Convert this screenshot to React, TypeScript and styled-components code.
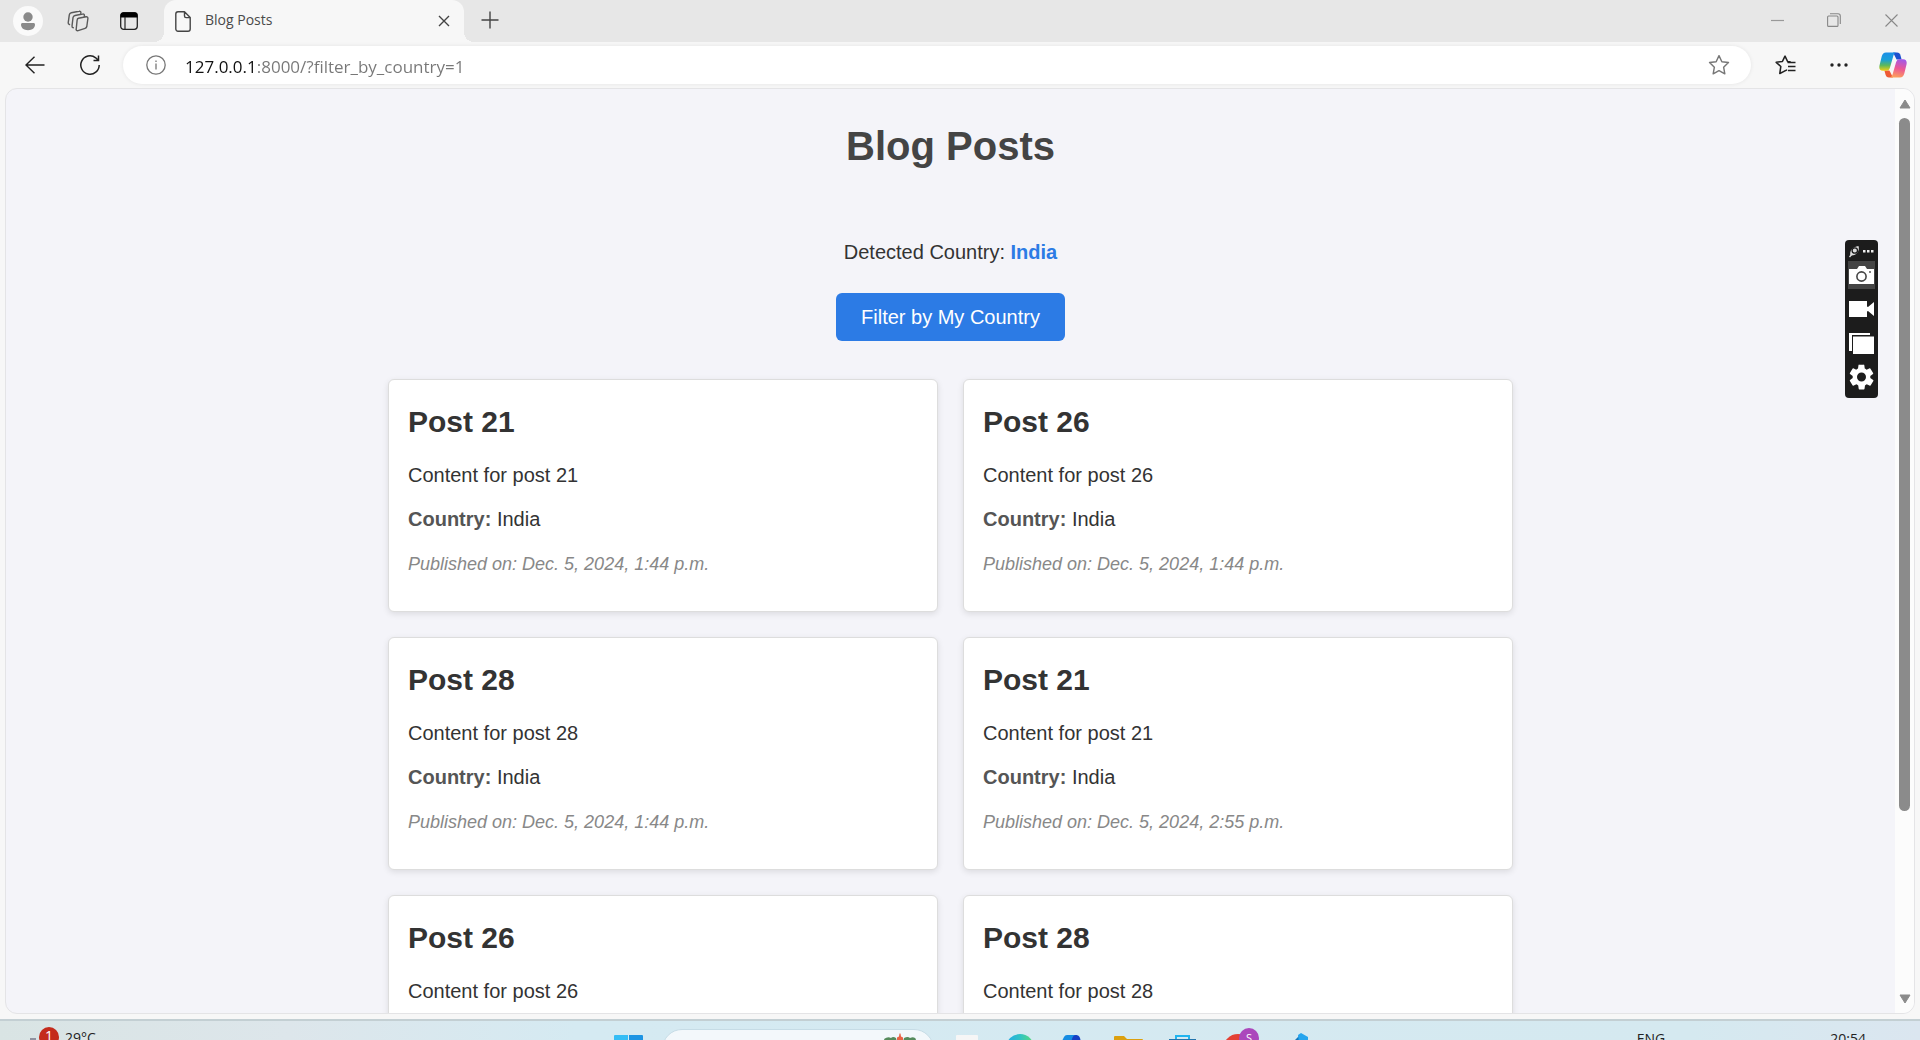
import React from "react";
import styled, { createGlobalStyle } from "styled-components";

const GlobalStyle = createGlobalStyle`
  *, *::before, *::after { box-sizing: border-box; }
  body { margin: 0; overflow: hidden; background: #f7f7f7; }
  button, input { font: inherit; margin: 0; }
`;

const uiFont = `"Open Sans", "Noto Sans", sans-serif`;

const Desktop = styled.div`
  display: flex;
  flex-direction: column;
  height: 100vh;
  overflow: hidden;
  font-family: ${uiFont};
`;

const BrowserWindow = styled.div`
  flex: 1;
  min-height: 0;
  display: flex;
  flex-direction: column;
  background: #f7f7f7;
`;

const TabStrip = styled.header`
  display: flex;
  height: 42px;
  padding-left: 3px;
  background: #e7e7e7;
`;

const IconButton = styled.button<{ $width?: number }>`
  display: flex;
  align-items: center;
  justify-content: center;
  flex: none;
  width: ${(p) => p.$width ?? 50}px;
  padding: 0;
  border: 0;
  background: none;
  color: #3c3c3c;
`;

const Avatar = styled.span`
  display: block;
  width: 30px;
  height: 30px;
  border-radius: 50%;
  background: #fafafa;
`;

const Tab = styled.div`
  position: relative;
  display: flex;
  align-items: center;
  width: 300px;
  margin-left: 9px;
  padding: 0 4px 0 11px;
  border-radius: 12px 12px 0 0;
  background: #f7f7f7;
  &::before, &::after {
    content: "";
    position: absolute;
    bottom: 0;
    width: 10px;
    height: 10px;
  }
  &::before {
    right: 100%;
    background: radial-gradient(circle at 0 0, transparent 10px, #f7f7f7 10px);
  }
  &::after {
    left: 100%;
    background: radial-gradient(circle at 100% 0, transparent 10px, #f7f7f7 10px);
  }
`;

const TabTitle = styled.span`
  flex: 1;
  padding: 0 0 2px 14px;
  font-size: 14px;
  line-height: 20px;
  color: #4a4a4a;
`;

const WindowControls = styled.div`
  display: flex;
  margin-left: auto;
`;

const Toolbar = styled.nav`
  display: flex;
  align-items: center;
  height: 46px;
  padding: 0 4px 0 7px;
`;

const AddressBar = styled.form`
  flex: 1;
  display: flex;
  align-items: center;
  height: 38px;
  margin-left: 6px;
  margin-right: 11px;
  padding: 0 7px 0 8px;
  border-radius: 19px;
  background: #fff;
  box-shadow: 0 0 4px rgba(0, 0, 0, 0.08);
`;

/* The host part is black, the rest of the address is grey. */
const AddressInput = styled.input`
  flex: 1;
  min-width: 0;
  height: 30px;
  padding: 2px 0 0 4px;
  border: 0;
  outline: 0;
  font-size: 17px;
  line-height: 28px;
  color: transparent;
  background: linear-gradient(90deg, #111 76px, #777 76px);
  background-clip: text;
  -webkit-background-clip: text;
`;

const Viewport = styled.div`
  flex: 1;
  min-height: 0;
  display: flex;
  margin: 0 5px 5px;
  border: 1px solid #e4e4e6;
  border-radius: 12px;
  overflow: hidden;
  background: #f4f4f9;
`;

const Page = styled.main`
  flex: 1;
  overflow: hidden;
  padding-top: 34px;
  font-family: "Liberation Sans", Arial, sans-serif;
  color: #333;
`;

const PageTitle = styled.h1`
  margin: 0;
  font-size: 40px;
  line-height: 46px;
  text-align: center;
  color: #444;
`;

const FilterSection = styled.section`
  display: flex;
  flex-direction: column;
  align-items: center;
  gap: 26px;
  margin: 68px 0 38px;
`;

const Detected = styled.p`
  margin: 0;
  font-size: 20px;
  line-height: 30px;
  strong { color: #2c7be5; }
`;

const FilterButton = styled.button`
  height: 48px;
  padding: 0 25px;
  border: 0;
  border-radius: 6px;
  background: #2c7be5;
  color: #fff;
  font-size: 20px;
  line-height: 24px;
`;

const PostGrid = styled.section`
  display: grid;
  grid-template-columns: 1fr 1fr;
  gap: 25px;
  max-width: 1125px;
  margin: 0 auto;
`;

const Card = styled.article`
  padding: 21px 19px 33px;
  border: 1px solid #ddd;
  border-radius: 6px;
  background: #fff;
  box-shadow: 0 2px 6px rgba(0, 0, 0, 0.1);
`;

const PostTitle = styled.h2`
  margin: 0 0 17px;
  font-size: 30px;
  line-height: 42px;
`;

const PostText = styled.p`
  margin: 0 0 14px;
  font-size: 20px;
  line-height: 30px;
  strong { color: #555; }
`;

const Published = styled.p`
  margin: 17px 0 0;
  font-size: 18px;
  line-height: 27px;
  font-style: italic;
  color: #888;
`;

const Scrollbar = styled.div`
  display: flex;
  flex-direction: column;
  align-items: center;
  flex: none;
  width: 19px;
  background: #fcfcfc;
`;

const ArrowBox = styled.span`
  display: flex;
  align-items: center;
  justify-content: center;
  height: 29px;
`;

const Track = styled.div`
  flex: 1;
  display: flex;
  flex-direction: column;
  width: 11px;
  &::before {
    content: "";
    flex: 4;
    border-radius: 6px;
    background: #8b8b8b;
  }
  &::after { content: ""; flex: 1; }
`;

const CaptureBar = styled.aside`
  position: fixed;
  top: 240px;
  right: 42px;
  display: flex;
  flex-direction: column;
  width: 33px;
  height: 158px;
  padding: 1px 3px 4px;
  border-radius: 4px;
  background: #1c1c1c;
`;

const CaptureButton = styled.button<{ $active?: boolean; $small?: boolean }>`
  display: flex;
  align-items: center;
  justify-content: center;
  flex: none;
  height: ${(p) => (p.$small ? 20 : 28)}px;
  margin-bottom: ${(p) => (p.$small ? 0 : 6)}px;
  padding: 0;
  border: 0;
  background: ${(p) => (p.$active ? "#444" : "none")};
`;

const Taskbar = styled.footer`
  display: grid;
  grid-template-columns: 1fr auto 1fr;
  height: 21px;
  overflow: hidden;
  border-top: 2px solid #c3cfd3;
  background: linear-gradient(90deg, #d9e4e4 0, #dde6eb 15%, #d5eaf2 30%, #d5e9f0 88%, #dbe6f0 100%);
`;

const Weather = styled.div`
  display: flex;
  padding-left: 30px;
  font-size: 14px;
  line-height: 20px;
  color: #222;
`;

const WeatherText = styled.span`
  padding: 7px 0 0 6px;
`;

const Apps = styled.div`
  display: flex;
  gap: 6px;
`;

const AppList = styled.div`
  display: flex;
`;

const TaskButton = styled.button`
  display: block;
  width: 54px;
  height: 40px;
  padding: 0;
  border: 0;
  background: none;
`;

const SearchBox = styled.div`
  display: flex;
  justify-content: flex-end;
  width: 272px;
  height: 40px;
  margin-top: 8px;
  padding-right: 16px;
  border: 1px solid #c6dce6;
  border-radius: 20px;
  background: #f3f8fb;
`;

const Tray = styled.div`
  display: flex;
  justify-content: flex-end;
  padding: 8px 54px 0 0;
  font-size: 14px;
  line-height: 20px;
  color: #222;
`;

const TrayItem = styled.span<{ $gap: number }>`
  margin-right: ${(p) => p.$gap}px;
`;

const Svg = ({ w, h, children, vb }: { w: number; h: number; vb?: string; children: React.ReactNode }) => (
  <svg width={w} height={h} viewBox={vb ?? `0 0 ${w} ${h}`} fill="none" aria-hidden="true">
    {children}
  </svg>
);

const CopilotIcon = () => (
  <Svg w={28} h={26}>
    <defs>
      <linearGradient id="cpBlue" x1="0" y1="0" x2="0" y2="1">
        <stop offset="0" stopColor="#1b8fe8" />
        <stop offset="0.4" stopColor="#1aa0d8" />
        <stop offset="0.7" stopColor="#5cb85c" />
        <stop offset="1" stopColor="#f2cf14" />
      </linearGradient>
      <linearGradient id="cpPink" x1="0.6" y1="0" x2="0.4" y2="1">
        <stop offset="0" stopColor="#a259e8" />
        <stop offset="0.5" stopColor="#ec5795" />
        <stop offset="1" stopColor="#fda05a" />
      </linearGradient>
    </defs>
    <path d="M14 0.500h4c2 0 3 1.200 3.500 3l1.100 4h-5z" fill="#1c50cf" />
    <path d="M14 25.500h-4c-2 0-3-1.200-3.500-3l-1.100-4h5z" fill="#ee5a35" />
    <path d="M7 0.500h10c-1.500.5-2.200 1.800-2.700 3.500L11 15.500c-.6 2.100-1.600 3.300-4 3.300H4C.5 18.800-.1 16.300.5 13.500L2.700 4.500C3.500 1.800 4.700.5 7 .5z" fill="url(#cpBlue)" />
    <path d="M21 25.500H11c1.500-.5 2.200-1.800 2.700-3.500L17 10.500c.6-2.100 1.600-3.300 4-3.300h3c3.500 0 4.100 2.500 3.500 5.300l-2.200 9c-.8 2.700-2 4-4.300 4z" fill="url(#cpPink)" />
  </Svg>
);

const starPath = "M10 1.500l2.600 5.500 6 .8-4.400 4.200 1.100 6L10 15.100 4.700 18l1.100-6L1.400 7.800l6-.8z";

const posts = [
  { title: "21", time: "1:44" },
  { title: "26", time: "1:44" },
  { title: "28", time: "1:44" },
  { title: "21", time: "2:55" },
  { title: "26", time: "2:55" },
  { title: "28", time: "2:55" },
];

const PostCard = ({ title, time }: { title: string; time: string }) => (
  <Card>
    <PostTitle>Post {title}</PostTitle>
    <PostText>Content for post {title}</PostText>
    <PostText><strong>Country:</strong> India</PostText>
    <Published>Published on: Dec. 5, 2024, {time} p.m.</Published>
  </Card>
);

const BrowserTabs = () => (
  <TabStrip>
    <IconButton aria-label="Profile">
      <Avatar>
        <Svg w={30} h={30}>
          <circle cx="15" cy="11" r="4.700" fill="#8a8a8a" />
          <path d="M8 18.500c0-.8.600-1.500 1.500-1.500h11c.9 0 1.500.7 1.500 1.500 0 3.500-2.700 5.700-7 5.700s-7-2.200-7-5.700z" fill="#8a8a8a" />
        </Svg>
      </Avatar>
    </IconButton>
    <IconButton aria-label="Workspaces">
      <Svg w={22} h={22}>
        <g stroke="#5a5a5a" strokeWidth="1.400" strokeLinejoin="round" strokeLinecap="round">
          <path d="M11.500 8.300l7.600-1.500c1.200-.2 2 .6 1.800 1.700l-1.100 8c-.2 1-.8 1.600-1.700 1.900l-7 2.300c-1.200.4-2.100-.3-1.900-1.500l.9-8.800c.1-1.200.5-1.900 1.400-2.100z" />
          <path d="M17.300 6.500l.1-1c.1-1.100-.7-1.800-1.800-1.500L8 5.500C6.900 5.800 6.200 6.500 6 7.600l-1 8.500c-.1.900.4 1.500 1.300 1.600" />
          <path d="M13.800 3.800l.1-1c.1-1.100-.7-1.800-1.800-1.500L4.300 2.800C3.200 3.100 2.500 3.800 2.300 4.900L1.200 12.800c-.1.900.4 1.500 1.300 1.700" />
        </g>
      </Svg>
    </IconButton>
    <IconButton $width={52} aria-label="Tab actions">
      <Svg w={18} h={18}>
        <rect x="0.700" y="0.700" width="16.600" height="16.600" rx="3" stroke="#222" strokeWidth="1.300" />
        <path d="M0.500 5.500V3.500a3 3 0 0 1 3-3h11a3 3 0 0 1 3 3v2z" fill="#000" />
        <path d="M5 5v12.500" stroke="#222" strokeWidth="1.200" />
      </Svg>
    </IconButton>
    <Tab>
      <Svg w={16} h={21}>
        <path d="M3 .8h6.500L15.200 6.500V18a2.200 2.200 0 0 1-2.200 2.200H3A2.200 2.200 0 0 1 .8 18V3A2.200 2.200 0 0 1 3 .8zM9.500 1v4a1.600 1.600 0 0 0 1.600 1.600H15" stroke="#444" strokeWidth="1.400" strokeLinejoin="round" />
      </Svg>
      <TabTitle>Blog Posts</TabTitle>
      <IconButton $width={32} aria-label="Close tab">
        <Svg w={12} h={12}><path d="M1 1l10 10M11 1L1 11" stroke="#444" strokeWidth="1.400" /></Svg>
      </IconButton>
    </Tab>
    <IconButton $width={52} aria-label="New tab">
      <Svg w={18} h={20}><path d="M9 .5v17M.5 9h17" stroke="#444" strokeWidth="1.400" /></Svg>
    </IconButton>
    <WindowControls>
      <IconButton $width={57} aria-label="Minimize">
        <Svg w={14} h={14}><path d="M0 6.500h13" stroke="#999" strokeWidth="1.200" /></Svg>
      </IconButton>
      <IconButton $width={57} aria-label="Restore">
        <Svg w={16} h={16}>
          <rect x="0.600" y="3" width="10.400" height="10.400" rx="1" stroke="#888" strokeWidth="1.100" />
          <path d="M3 .7h8a2.300 2.300 0 0 1 2.300 2.300v8" stroke="#888" strokeWidth="1.100" />
        </Svg>
      </IconButton>
      <IconButton $width={57} aria-label="Close">
        <Svg w={14} h={14}><path d="M.5.500l12 12M12.500.500l-12 12" stroke="#888" strokeWidth="1.100" /></Svg>
      </IconButton>
    </WindowControls>
  </TabStrip>
);

const BrowserToolbar = () => (
  <Toolbar>
    <IconButton $width={56} aria-label="Back">
      <Svg w={20} h={18}><path d="M9.500.800L1 9l8.500 8.200M1 9h18.500" stroke="#222" strokeWidth="1.400" /></Svg>
    </IconButton>
    <IconButton $width={54} aria-label="Reload">
      <Svg w={20} h={20}>
        <path d="M19.200 10a9.200 9.200 0 1 1-3.500-7.200l2.600 2.500M18.500.500v5h-5" stroke="#222" strokeWidth="1.500" />
      </Svg>
    </IconButton>
    <AddressBar onSubmit={(e) => e.preventDefault()}>
      <IconButton $width={50} type="button" aria-label="Site information">
        <Svg w={20} h={20}>
          <circle cx="10" cy="10" r="9.200" stroke="#777" strokeWidth="1.300" />
          <path d="M10 8.500v6M10 5.400v1.500" stroke="#777" strokeWidth="1.300" />
        </Svg>
      </IconButton>
      <AddressInput aria-label="Address" defaultValue="127.0.0.1:8000/?filter_by_country=1" spellCheck={false} />
      <IconButton $width={50} type="button" aria-label="Add to favorites">
        <Svg w={22} h={22} vb="0 0 20 20"><path d={starPath} stroke="#777" strokeWidth="1.300" strokeLinejoin="round" /></Svg>
      </IconButton>
    </AddressBar>
    <IconButton $width={46} aria-label="Favorites">
      <Svg w={21} h={20}>
        <path d="M13 6.500L12.600 6.500 10 1.200 7.400 6.500l-6.200.800 4.600 4.200-1 7 4.700-2.400M12.600 6.500l2.400.4M9.500 16.100l2-1" stroke="#222" strokeWidth="1.600" strokeLinejoin="round" strokeLinecap="round" />
        <path d="M12.500 7.500H20.500M13 11.500h7.500M13 15.500h7.500" stroke="#222" strokeWidth="1.500" />
      </Svg>
    </IconButton>
    <IconButton $width={62} aria-label="Settings and more">
      <Svg w={18} h={4}><circle cx="2" cy="2" r="1.700" fill="#222" /><circle cx="9" cy="2" r="1.700" fill="#222" /><circle cx="16" cy="2" r="1.700" fill="#222" /></Svg>
    </IconButton>
    <IconButton $width={46} aria-label="Copilot"><CopilotIcon /></IconButton>
  </Toolbar>
);

const CaptureTools = () => (
  <CaptureBar aria-label="Screen capture">
    <CaptureButton $small aria-label="Capture menu">
      <Svg w={27} h={14}>
        <path d="M2.500 11.500c-1.500-4 2-9 8-9.500 1.500 5-2 10-8 9.500z" fill="#ddd" />
        <circle cx="6.800" cy="6.500" r="2.700" stroke="#1c1c1c" strokeWidth="1.300" />
        <path d="M1.500 13l2.500-3" stroke="#ddd" strokeWidth="1.300" />
        <path d="M15 6h2.500v2.500H15zM19 6h2.500v2.500H19zM23 6h2.500v2.500H23z" fill="#eee" />
      </Svg>
    </CaptureButton>
    <CaptureButton $active aria-label="Take screenshot">
      <Svg w={25} h={20}>
        <path d="M0 4h8l2-3h6l2 3h7v15H0z" fill="#fff" />
        <circle cx="12.500" cy="11.500" r="4.600" stroke="#444" strokeWidth="1.600" />
        <circle cx="21" cy="7" r="0.900" fill="#444" />
      </Svg>
    </CaptureButton>
    <CaptureButton aria-label="Record video">
      <Svg w={25} h={16}><path d="M0 0h18v5.500l1 .5 6-5v14l-6-5-1 .5V16H0z" fill="#fff" /></Svg>
    </CaptureButton>
    <CaptureButton aria-label="Gallery">
      <Svg w={25} h={21}><path d="M0 0h21v2H3v16H0z" fill="#fff" /><path d="M4 3.500h21V21H4z" fill="#fff" /></Svg>
    </CaptureButton>
    <CaptureButton aria-label="Capture settings">
      <Svg w={28} h={28} vb="0 0 24 24">
        <path fill="#fff" fillRule="evenodd" d="M19.800 12.900a8 8 0 0 0 0-1.800l2.400-1.800a.6.600 0 0 0 .1-.8L20 4.600a.6.600 0 0 0-.7-.3l-2.800 1.200a8 8 0 0 0-1.600-1l-.4-3a.6.600 0 0 0-.6-.5h-4a.6.600 0 0 0-.6.500l-.4 3a8 8 0 0 0-1.600 1L4.700 4.300a.6.600 0 0 0-.7.300L1.700 8.500a.6.600 0 0 0 .1.800l2.400 1.800a8 8 0 0 0 0 1.800l-2.400 1.800a.6.600 0 0 0-.1.800L4 19.400c.1.300.4.400.7.300l2.800-1.200a8 8 0 0 0 1.600 1l.4 3c0 .3.300.5.600.5h4c.3 0 .6-.2.600-.5l.4-3a8 8 0 0 0 1.600-1l2.800 1.200c.3.100.6 0 .7-.3l2.300-3.900a.6.600 0 0 0-.1-.8zM12 16a4 4 0 1 1 0-8 4 4 0 0 1 0 8z" />
      </Svg>
    </CaptureButton>
  </CaptureBar>
);

const SystemTaskbar = () => (
  <Taskbar>
    <Weather>
      <Svg w={29} h={40}>
        <path d="M0 18h6" stroke="#778" strokeWidth="1.500" />
        <circle cx="19" cy="16" r="10" fill="#c42b1c" />
        <text x="19" y="20" textAnchor="middle" fontSize="14" fontFamily={uiFont} fill="#fff">1</text>
      </Svg>
      <WeatherText>29°C</WeatherText>
    </Weather>
    <Apps>
      <TaskButton aria-label="Start">
        <Svg w={54} h={40}>
          <path d="M12 15q0-1 1-1h13v14H12z" fill="#35bdf5" />
          <path d="M27 14h13q1 0 1 1v13H27z" fill="#1d94e3" />
        </Svg>
      </TaskButton>
      <SearchBox>
        <Svg w={34} h={24}>
          <path d="M1 9q4-3 7-1 2-2 5 0l1 4H2zM21 8q4-2 6 0 4-2 6 1l-1 3H20z" fill="#568b5c" />
          <path d="M16.500 3.500h1l.5 3 2 1v8h-6v-8l2-1z" fill="#e96346" />
        </Svg>
      </SearchBox>
      <AppList>
        <TaskButton aria-label="Task view">
          <Svg w={54} h={40}><rect x="16" y="14" width="22" height="22" rx="1" fill="#f6f6f6" /></Svg>
        </TaskButton>
        <TaskButton aria-label="Edge">
          <Svg w={54} h={40}>
            <defs><linearGradient id="edge"><stop offset="0" stopColor="#21a9e8" /><stop offset="0.500" stopColor="#30c3c4" /><stop offset="1" stopColor="#5ddc74" /></linearGradient></defs>
            <circle cx="26" cy="27" r="14" fill="url(#edge)" />
          </Svg>
        </TaskButton>
        <TaskButton aria-label="Outlook">
          <Svg w={54} h={40}>
            <path d="M12 24l4-8q1-2 3-2h10l-4 12z" fill="#168ce2" />
            <path d="M24 18q1-4 4-4 3 0 4 3l2 8H22z" fill="#173fc4" />
          </Svg>
        </TaskButton>
        <TaskButton aria-label="File Explorer">
          <Svg w={54} h={40}><path d="M12 16q0-1 1-1h9l3 3h15q1 0 1 1v14H12z" fill="#dca00f" /></Svg>
        </TaskButton>
        <TaskButton aria-label="Microsoft Store">
          <Svg w={54} h={40}>
            <path d="M20 19v-4h13v4" stroke="#20b4ef" strokeWidth="2" />
            <path d="M13 18h27v16H13z" fill="#2375ad" />
          </Svg>
        </TaskButton>
        <TaskButton aria-label="Chrome">
          <Svg w={54} h={40}>
            <circle cx="28" cy="28" r="15" fill="#e44134" />
            <circle cx="39" cy="17" r="10" fill="#ab47bc" />
            <text x="39" y="21" textAnchor="middle" fontSize="11" fontFamily={uiFont} fill="#fff">S</text>
          </Svg>
        </TaskButton>
        <TaskButton aria-label="Visual Studio Code">
          <Svg w={54} h={40}><path d="M28 22l8-8v14z" fill="#1576ba" /><path d="M34 14l3-2 7 4v14h-8z" fill="#25a5ee" /></Svg>
        </TaskButton>
      </AppList>
    </Apps>
    <Tray>
      <TrayItem $gap={65}>
        <Svg w={14} h={14}><path d="M0 10.500h8M11 10.500h3" stroke="#555" /></Svg>
      </TrayItem>
      <TrayItem $gap={165}>ENG</TrayItem>
      <TrayItem $gap={0}>20:54</TrayItem>
    </Tray>
  </Taskbar>
);

export default function App() {
  return (
    <Desktop>
      <GlobalStyle />
      <BrowserWindow>
        <BrowserTabs />
        <BrowserToolbar />
        <Viewport>
          <Page>
            <PageTitle>Blog Posts</PageTitle>
            <FilterSection>
              <Detected>Detected Country: <strong>India</strong></Detected>
              <FilterButton>Filter by My Country</FilterButton>
            </FilterSection>
            <PostGrid>
              {posts.map((post, i) => <PostCard key={i} {...post} />)}
            </PostGrid>
          </Page>
          <Scrollbar>
            <ArrowBox><Svg w={12} h={10}><path d="M6 1l5 8H1z" fill="#8b8b8b" stroke="#8b8b8b" strokeLinejoin="round" /></Svg></ArrowBox>
            <Track />
            <ArrowBox><Svg w={12} h={10}><path d="M6 9L1 1h10z" fill="#8b8b8b" stroke="#8b8b8b" strokeLinejoin="round" /></Svg></ArrowBox>
          </Scrollbar>
        </Viewport>
      </BrowserWindow>
      <CaptureTools />
      <SystemTaskbar />
    </Desktop>
  );
}
